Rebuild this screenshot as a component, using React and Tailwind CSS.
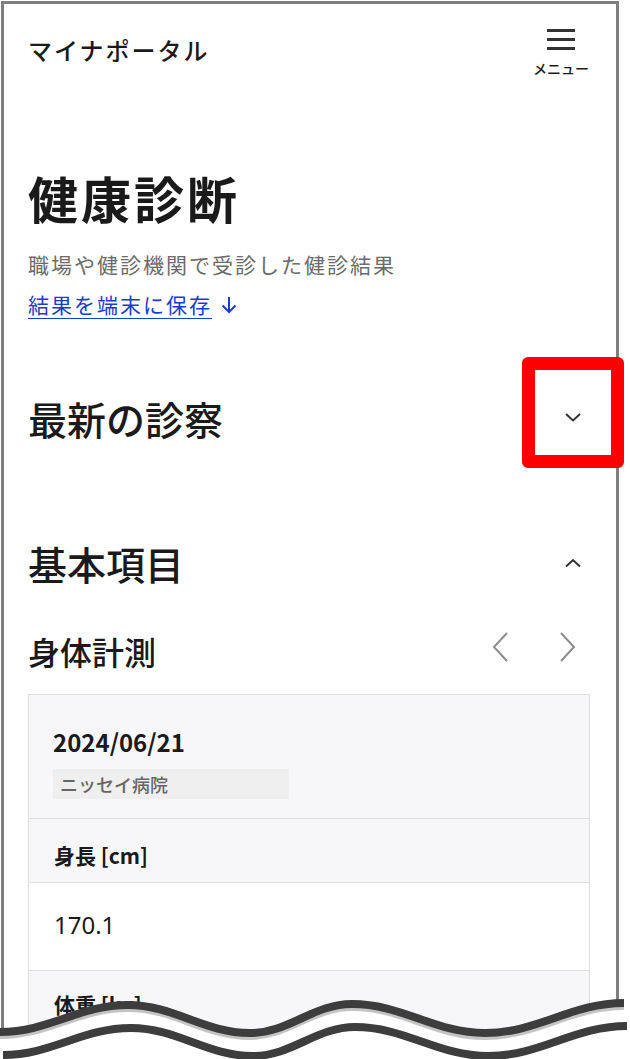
import React from 'react';

const jp = { fontFamily: '"Noto Sans CJK JP", "Noto Sans", sans-serif' };

const Chevron = ({ dir = 'down', className = '' }) => (
    <svg width="18" height="10" viewBox="0 0 18 10" className={className}>
        <polyline
            points={dir === 'down' ? '2,2 9,8.5 16,2' : '2,8.5 9,2 16,8.5'}
            fill="none"
            stroke="#333"
            strokeWidth="2"
        />
    </svg>
);

const Arrow = ({ dir }) => (
    <svg width="18" height="32" viewBox="0 0 18 32">
        <polyline
            points={dir === 'left' ? '16,2 3,16 16,30' : '2,2 15,16 2,30'}
            fill="none"
            stroke="#8c8c8c"
            strokeWidth="2"
        />
    </svg>
);

// build a smooth wave through the given extrema
const wavePath = (pts, dy = 0) => {
    let d = `M${pts[0][0]} ${pts[0][1] + dy}`;
    for (let i = 1; i < pts.length; i++) {
        const [x0, y0] = pts[i - 1];
        const [x1, y1] = pts[i];
        const k = (x1 - x0) * 0.38;
        d += ` C${x0 + k} ${y0 + dy} ${x1 - k} ${y1 + dy} ${x1} ${y1 + dy}`;
    }
    return d;
};

// torn-paper edge at the bottom of the capture
const Wave = () => {
    const pts = [[0, 42], [128, 15], [250, 43], [352, 14], [485, 43], [624, 13]];
    const top = wavePath(pts);
    const low = wavePath(pts.map(([x, y]) => [x + 3, y]), 23);
    return (
        <svg width="630" height="69" viewBox="0 0 630 69" className="absolute left-0 top-[990px]">
            <path d={top + ' L630 13 L630 69 L0 69 Z'} fill="#fff" />
            <path d={top} fill="none" stroke="#c4c4c4" strokeWidth="4" transform="translate(0 5)" />
            <path d={top} fill="none" stroke="#3d3d3d" strokeWidth="8" />
            <path d={low} fill="none" stroke="#3d3d3d" strokeWidth="8" />
        </svg>
    );
};

const App = () => {
    return (
        <div className="relative w-[630px] h-[1059px] overflow-hidden bg-white pl-[1px] pt-[1px]" style={jp}>
            <div className="w-[618px] h-[1100px] border-[3px] border-b-0 border-[#7f7f7f] px-[24px] text-[#1a1a1a]">
                {/* header */}
                <header className="h-[92px] flex items-center justify-between">
                    <div className="text-[24px] leading-[32px] tracking-[2px] font-medium">マイナポータル</div>
                    <button className="w-[60px] flex flex-col items-center mt-[6px] mr-[1px]">
                        <span className="flex flex-col gap-[6px]">
                            <span className="block w-[28px] h-[3px] bg-[#333]" />
                            <span className="block w-[28px] h-[3px] bg-[#333]" />
                            <span className="block w-[28px] h-[3px] bg-[#333]" />
                        </span>
                        <span className="mt-[9px] text-[14px] leading-[18px] font-medium">メニュー</span>
                    </button>
                </header>

                {/* title */}
                <h1 className="mt-[71px] text-[50px] leading-[60px] tracking-[3px] font-bold">健康診断</h1>
                <p className="mt-[22px] text-[21px] leading-[30px] tracking-[2px] text-[#6b6b6b]">職場や健診機関で受診した健診結果</p>
                <a href="#" className="mt-[10px] flex items-center text-[21px] leading-[30px] tracking-[2px] text-[#1a3bd0]">
                    <span className="underline underline-offset-[5px] decoration-1">結果を端末に保存</span>
                    <svg width="18" height="20" viewBox="0 0 18 20" className="ml-[8px] mt-[2px]">
                        <line x1="9" y1="2" x2="9" y2="17" stroke="#1a3bd0" strokeWidth="2" />
                        <polyline points="2.5,10.5 9,17 15.5,10.5" fill="none" stroke="#1a3bd0" strokeWidth="2" />
                    </svg>
                </a>

                {/* latest */}
                <div className="mt-[74px] h-[50px] flex items-center justify-between">
                    <h2 className="text-[39px] leading-[50px] font-medium">最新の診察</h2>
                    <Chevron dir="down" className="mr-[10px] -mt-[3px]" />
                </div>

                {/* basic */}
                <div className="mt-[95px] h-[50px] flex items-center justify-between">
                    <h2 className="text-[39px] leading-[50px] font-medium">基本項目</h2>
                    <Chevron dir="up" className="mr-[10px]" />
                </div>

                <div className="mt-[43px] h-[40px] flex items-center justify-between">
                    <h3 className="text-[32px] leading-[40px] font-medium">身体計測</h3>
                    <div className="flex items-center gap-[50px] mr-[15px] -mt-[8px]">
                        <Arrow dir="left" />
                        <Arrow dir="right" />
                    </div>
                </div>

                {/* card */}
                <div className="mt-[23px] w-[562px] border border-[#dedede]">
                    <div className="bg-[#f7f7f9] pt-[31px] pb-[19px] px-[24px] border-b border-[#dedede]">
                        <div className="text-[24px] leading-[32px] font-bold">2024/06/21</div>
                        <div className="mt-[11px] w-[236px] h-[30px] bg-[#efefef] px-[7px] flex items-center text-[18px] font-medium text-[#666]">
                            ニッセイ病院
                        </div>
                    </div>
                    <div className="bg-[#f7f7f9] h-[64px] pt-[21px] px-[25px] border-b border-[#dedede] text-[21px] leading-[30px] font-bold">
                        身長 [cm]
                    </div>
                    <div className="h-[88px] pt-[27px] px-[25px] border-b border-[#dedede] text-[24px] leading-[30px]" style={{ fontFamily: '"Noto Sans", sans-serif' }}>
                        170.1
                    </div>
                    <div className="bg-[#f7f7f9] h-[64px] pt-[18px] px-[25px] border-b border-[#dedede] text-[21px] leading-[30px] font-bold">
                        体重 [kg]
                    </div>
                </div>
            </div>

            {/* highlight */}
            <div className="absolute left-[522px] top-[357px] w-[102px] h-[111px] border-[13px] border-[#ff0000] rounded-[6px]" />

            <Wave />
        </div>
    );
};

export default App;
